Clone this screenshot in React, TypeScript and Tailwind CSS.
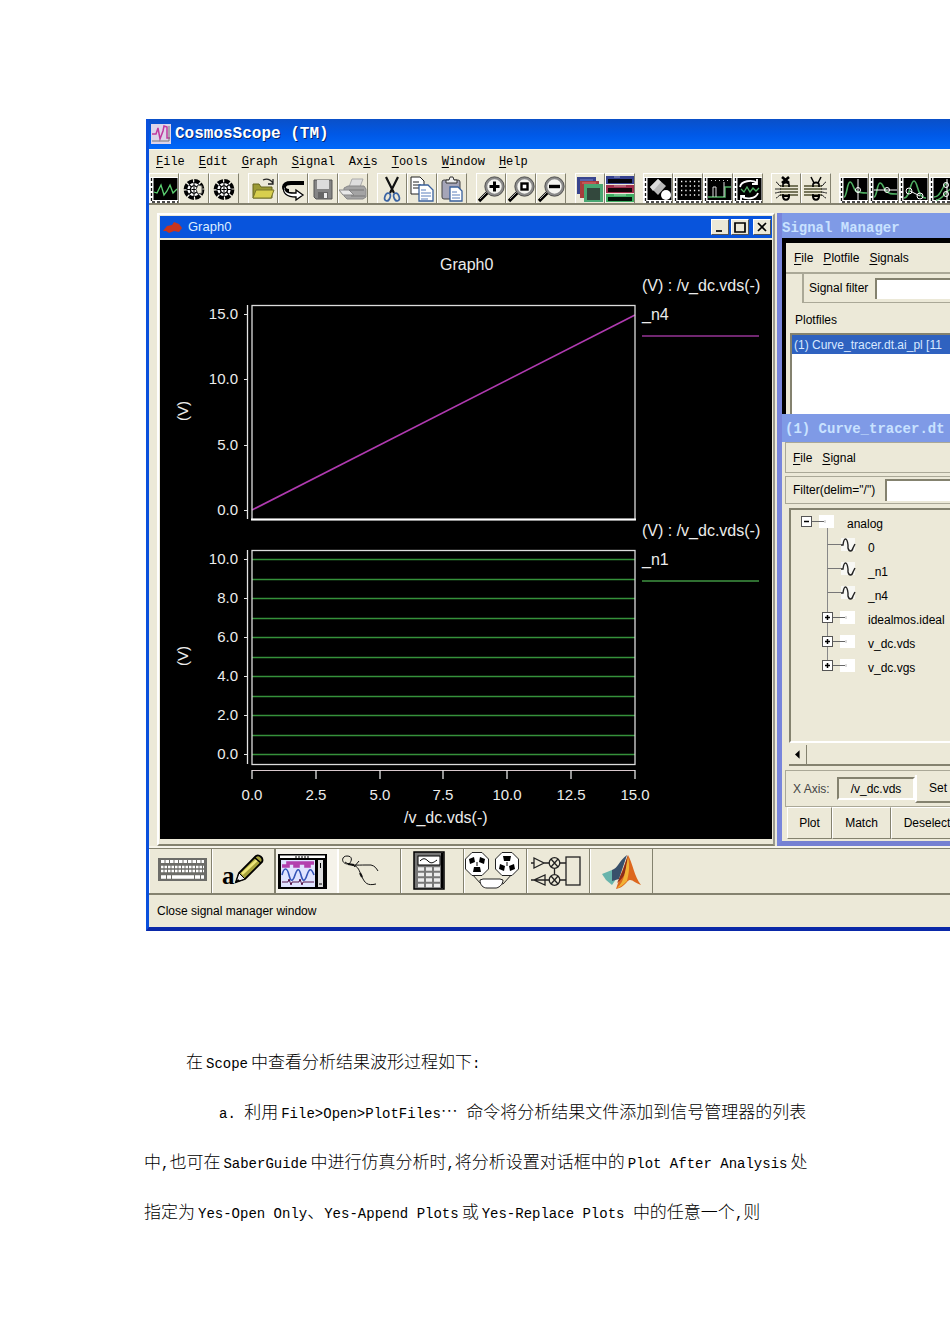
import React from "react";

type Kids = { children?: React.ReactNode };

/* ---------- toolbar icons (28 x 28) ---------- */

const Pic = ({ children }: Kids) => (
  <svg viewBox="0 0 28 28" className="block h-7 w-7" aria-hidden="true">
    {children}
  </svg>
);

const Scope = ({ children }: Kids) => (
  <Pic>
    <rect x="0" y="2" width="28" height="26" fill="#fff" />
    <path d="M1.500 3v24M2 27h26" stroke="#111" strokeWidth="1.300" strokeDasharray="3 2" fill="none" />
    <rect x="3.500" y="3" width="24" height="22" fill="#000" />
    {children}
  </Pic>
);

const Reel = ({ inner }: { inner: boolean }) => (
  <Pic>
    <circle cx="14" cy="14.500" r="8.500" fill="#fff" stroke="#000" strokeWidth="3.800" strokeDasharray="5.400 1.276" />
    <path d="M14 7v15M6.500 14.500h15M9 9.500l10 10M19 9.500l-10 10" stroke="#000" strokeWidth="1.100" />
    <circle cx="14" cy="14.500" r="3.600" fill="#fff" stroke="#000" strokeWidth="1.400" />
    <path d="M14 12v5M11.500 14.500h5" stroke="#000" />
    {inner ? <path d="M18 10l4 1v7l-4 1-2-4.500z" fill="#ece9d8" stroke="#555" /> : null}
  </Pic>
);

const Lens = ({ children }: Kids) => (
  <Pic>
    <path d="M2 26l9-9" stroke="#000" strokeWidth="3.4" />
    <path d="M3 24l7-7" stroke="#aaa" strokeWidth="1" />
    <circle cx="17.500" cy="11.500" r="8.500" fill="#f4f4f0" stroke="#8a8a8a" strokeWidth="2.600" />
    <circle cx="17.500" cy="11.500" r="9.700" fill="none" stroke="#333" strokeWidth=".7" />
    {children}
  </Pic>
);

const Bundle = ({ flip }: { flip: boolean }) => (
  <Pic>
    <g transform={flip ? "matrix(-1 0 0 1 28 0)" : undefined}>
      <path d="M8 11h18M8 14h18M8 17h18M8 20h18" stroke="#77765a" strokeWidth="2" />
      <path d="M9 11c-3 0-3-4-5-4M9 14H3M9 17c-3 0-4 1-6 1M9 20c-3 0-3 3-5 3" stroke="#222" fill="none" />
      {flip ? (
        <path d="M9 2l3 6M19 2l-3 6" stroke="#000" strokeWidth="1.500" />
      ) : (
        <path d="M10 2l7 6M17 2l-7 6" stroke="#000" strokeWidth="2.600" />
      )}
      <path d="M11 9c1-2 5-2 6 0M11 21c0 5 6 5 6 0z" fill="none" stroke="#000" strokeWidth="2" />
      <path d="M11 9v3M17 9v3M11 19v3M17 19v3" stroke="#000" strokeWidth="1.600" />
    </g>
  </Pic>
);

const green = "#4fae62";

const groupsA: [string, React.ReactNode][][] = [
  [
    ["New graph", <Scope key="i"><path d="M4 17l3 1 4-8 3 10 3-4 3-6 3 8 4-4" stroke="#5bd070" fill="none" strokeWidth="1.3" /></Scope>],
    ["Reel", <Reel key="i" inner />],
    ["Reel list", <Reel key="i" inner={false} />],
  ],
  [
    ["Open", <Pic key="i"><path d="M4 23V9h6l2 3h11v11z" fill="#9b9a34" stroke="#66651c" /><path d="M4 23l3-8h18l-3 8z" fill="#d8cf4e" stroke="#77752a" /><path d="M14 5c4-2 7-1 10 3M24 4v5h-5" stroke="#222" fill="none" strokeWidth="1.300" /></Pic>],
    ["Undo", <Pic key="i"><path d="M25 8H12c-9 0-9 8-2 8" stroke="#000" strokeWidth="4" fill="none" /><path d="M5 12c-2 6 3 10 12 10v3l7-5-7-5v3c-6 0-10 0-11-4" fill="#fff" stroke="#000" strokeWidth="1.300" /></Pic>],
    ["Save", <Pic key="i"><path d="M5 5h18v19H7l-2-2z" fill="#858585" stroke="#555" /><rect x="8" y="5" width="12" height="9" fill="#dcdcdc" /><rect x="9" y="17" width="10" height="7" fill="#666" /><rect x="15" y="18" width="3" height="5" fill="#eee" /></Pic>],
    ["Print", <Pic key="i"><path d="M10 12l3-8h11l-3 8z" fill="#dedede" stroke="#aaa" /><path d="M5 13l4-2h16l2 3v8l-3 2H8l-3-3z" fill="#a4a4a4" stroke="#888" /><path d="M0 15h10l5 5H4z" fill="#e8e8e8" stroke="#888" /><path d="M10 15h15M12 21h14" stroke="#777" /></Pic>],
  ],
  [
    ["Cut", <Pic key="i"><path d="M8 2l8 16M20 2l-8 16" stroke="#111" strokeWidth="2.200" /><ellipse cx="9.500" cy="22" rx="2.600" ry="4" fill="none" stroke="#3a64a4" strokeWidth="1.700" transform="rotate(20 9.500 22)" /><ellipse cx="18.500" cy="22" rx="2.600" ry="4" fill="none" stroke="#3a64a4" strokeWidth="1.700" transform="rotate(-20 18.500 22)" /></Pic>],
    ["Copy", <Pic key="i"><path d="M3 2h9l4 4v13H3z" fill="#fff" stroke="#222" /><path d="M5 7h6M5 10h8M5 13h8" stroke="#222" /><path d="M11 10h9l5 5v11H11z" fill="#fff" stroke="#39609c" strokeWidth="1.300" /><path d="M13 15h5M13 18h10M13 21h10M13 24h7" stroke="#5a7fbc" /></Pic>],
    ["Paste", <Pic key="i"><rect x="4" y="5" width="18" height="19" rx="2" fill="#a5a5b8" stroke="#444" /><path d="M8 8V5h3l1-3h3l1 3h3v3z" fill="#eee" stroke="#333" /><path d="M12 12h8l4 4v10H12z" fill="#fff" stroke="#39609c" strokeWidth="1.300" /><path d="M14 17h5M14 20h8M14 23h8" stroke="#5a7fbc" /></Pic>],
  ],
  [
    ["Zoom in", <Lens key="i"><path d="M17.500 6.500v10M12.500 11.500h10" stroke="#000" strokeWidth="3" /></Lens>],
    ["Zoom fit", <Lens key="i"><rect x="14.500" y="8.500" width="6" height="6" fill="#fff" stroke="#000" strokeWidth="2.400" /></Lens>],
    ["Zoom out", <Lens key="i"><path d="M12 11.500h11" stroke="#000" strokeWidth="3.400" /></Lens>],
  ],
  [
    ["Cascade", <Pic key="i"><rect x="1" y="2" width="19" height="17" fill="#39458e" /><path d="M4 5h13" stroke="#7584cc" /><rect x="4" y="6" width="19" height="17" fill="#a83d3d" /><path d="M6 8h14" stroke="#e07070" /><rect x="8" y="9" width="19" height="18" fill="#49a672" /><rect x="11" y="13" width="13" height="12" fill="#33483d" /></Pic>],
    ["Tile", <Pic key="i"><rect x="0" y="1" width="28" height="8" fill="#35418f" /><rect x="2" y="4" width="24" height="4" fill="#05050d" /><rect x="0" y="10" width="28" height="8" fill="#a02f4d" /><rect x="2" y="13" width="24" height="4" fill="#16050a" /><rect x="0" y="19" width="28" height="8" fill="#3fae62" /><rect x="2" y="22" width="24" height="4" fill="#04150a" /><path d="M8 2h6M8 11h12M8 20h12" stroke="#fff" strokeOpacity=".5" /></Pic>],
  ],
];

const groupsB: [string, React.ReactNode][][] = [
  [
    ["Erase", <Scope key="i"><path d="M6 12l8-8 8 7-8 9z" fill="#b9b9b9" /><path d="M6 12l8-8 3 3-8 9z" fill="#dcdcdc" /><circle cx="22" cy="20" r="5" fill="#fff" /></Scope>],
    ["Grid", <Scope key="i"><path d="M7 6.500h19M7 11h19M7 15.500h19M7 20h19" stroke="#fff" strokeWidth="1.300" strokeDasharray="1.300 3" /></Scope>],
    ["Digital", <Scope key="i"><path d="M7 5.500h19" stroke="#ccc" strokeDasharray="1 3" /><path d="M4 22h17V12h6" stroke={green} fill="none" strokeWidth="1.500" /><path d="M9 22V12h3v10M20 22V7" stroke="#ddd" fill="none" /></Scope>],
    ["Refresh", <Scope key="i"><path d="M6 12c1-6 12-8 17-4M23 4v5h-5M24 18c-2 6-12 7-17 3M7 25v-4h4" stroke="#fff" fill="none" strokeWidth="1.800" /><path d="M7 14l3 3 3-5 3 5 3-4 3 3 3-3" stroke={green} fill="none" strokeWidth="1.300" /></Scope>],
  ],
  [
    ["Create bus", <Bundle key="i" flip={false} />],
    ["Split bus", <Bundle key="i" flip />],
  ],
  [
    ["Measure", <Scope key="i"><path d="M4 22c3 0 3-15 6-15s3 7 6 9 5 2 11 2" stroke={green} fill="none" strokeWidth="1.600" /><path d="M18 4v21" stroke="#fff" /><circle cx="18" cy="15" r="2.500" fill="none" stroke="#fff" /></Scope>],
    ["Level", <Scope key="i"><path d="M4 22c3 0 3-14 6-14s3 5 6 8 5 3 11 3" stroke={green} fill="none" strokeWidth="1.600" /><path d="M4 15h23" stroke="#fff" /><circle cx="17" cy="15" r="2.500" fill="none" stroke="#fff" /></Scope>],
    ["Two points", <Scope key="i"><path d="M4 23c6 0 6-17 10-17s3 17 12 17" stroke={green} fill="none" strokeWidth="1.600" /><path d="M10 16l10 5" stroke="#fff" /><circle cx="9" cy="16" r="3" fill="none" stroke="#fff" /><circle cx="20" cy="21" r="3" fill="none" stroke="#fff" /></Scope>],
    ["Cross", <Scope key="i"><path d="M4 22c8 0 8-14 14-14M6 25c8 0 10-12 18-12" stroke={green} fill="none" strokeWidth="1.400" /><path d="M17 4v21" stroke="#fff" /><circle cx="16" cy="10" r="2.500" fill="none" stroke="#fff" /><circle cx="16" cy="19" r="2.500" fill="none" stroke="#fff" /></Scope>],
  ],
];

const ToolGroup = ({ items }: { items: [string, React.ReactNode][] }) => (
  <div className="flex">
    {items.map(([name, icon]) => (
      <button key={name} type="button" aria-label={name} className="h-[30px] w-[30px] shrink-0 border-l border-t border-r border-l-white border-t-white border-r-[#84826f] bg-[#ece9d8]">
        {icon}
      </button>
    ))}
  </div>
);

/* ---------- large application buttons (61 x 44) ---------- */

const Big = ({ children }: Kids) => (
  <svg viewBox="1 0 61 44" className="block h-11 w-[61px]" aria-hidden="true">
    {children}
  </svg>
);

const Outlet = ({ x, turn }: { x: number; turn: number }) => (
  <g transform={`translate(${x} 15) rotate(${turn})`}>
    <path d="M-5-11.500H5L11.500-5V5L5 11.500H-5L-11.500 5V-5z" fill="#fff" stroke="#222" />
    <path d="M-3 3h6l1 5h-8zM-8-5l5-2 1 5-5 2zM8-5L3-7 2-2l5 2z" fill="#000" />
    <path d="M0-2v4" stroke="#000" />
  </g>
);

const apps: [string, React.ReactNode][] = [
  ["Keyboard", <Big key="i"><rect x="9" y="9" width="49" height="23" fill="#6c6c68" /><path d="M12 12.500h43" stroke="#fff" strokeWidth="3" strokeDasharray="3.500 1" /><path d="M12 18h43M12 22h43" stroke="#fff" strokeWidth="2.600" strokeDasharray="2.500 1" /><path d="M12 28h43" stroke="#fff" strokeWidth="3.500" strokeDasharray="5 1 4 1 22 1" /></Big>],
  ["Annotate", <Big key="i"><text x="10" y="35" fontFamily="Liberation Serif, serif" fontWeight="700" fontSize="25">a</text><path d="M24 33l3-9 17-17c3-2 8 2 6 6L33 30z" fill="#a6a23c" stroke="#000" strokeWidth="1.800" /><path d="M30 25l15-14" stroke="#eee67a" strokeWidth="2.500" /><path d="M24 33l3-9 6 6z" fill="#eee" stroke="#000" /><path d="M23 34l3-4 2 2z" fill="#000" /><path d="M42 8l7 6" stroke="#000" strokeWidth="1.500" /></Big>],
  ["Scope", <Big key="i"><g transform="translate(-5 0)"><rect x="8" y="5" width="49" height="35" fill="#000" /><rect x="10" y="6.500" width="45" height="2.500" fill="#fff" /><path d="M25 8h14" stroke="#000" strokeDasharray="2 1" /><rect x="11" y="11" width="34" height="27" fill="#dfe3ff" /><path d="M12 17h6v-3h7v3h3v-3h8v3h3v-3h5" stroke="#b340ae" strokeWidth="3.600" fill="none" /><path d="M12 26c2-8 5-8 7 0s4 6 6 0 4-8 6 0 4 6 6 0 4-8 7 0" stroke="#3555b8" strokeWidth="1.600" fill="none" /><path d="M12 33h6l1-3 2 6 1-3h7l1-3 2 6 1-3h11" stroke="#55154a" fill="none" /><rect x="48" y="11" width="5" height="27" fill="#ddd" /><path d="M50.500 14v5M49 35h3" stroke="#000" /></g></Big>],
  ["Probe", <Big key="i"><g transform="translate(-6 0)"><path d="M16 15c-7 0-7-8-1-8 6 0 5 5 2 8M13 13c5 4 13 3 20 3h6c4 1 5 3 7 6" stroke="#111" fill="none" /><path d="M20 16c7 1 7 6 10 12 3 6 5 9 14 7M22 18l5-6" stroke="#111" fill="none" /><path d="M16 15l6 1M28 24l2 4" stroke="#111" strokeWidth="2" /></g></Big>],
  ["Calculator", <Big key="i"><g transform="translate(-3 0)"><rect x="16" y="3" width="30" height="37" fill="#777" stroke="#000" strokeWidth="1.500" /><rect x="20" y="7" width="22" height="9" fill="#fff" stroke="#000" /><path d="M22 12c3-3 5-3 8 0s5 2 9-1" stroke="#000" fill="none" /><path d="M20 20h22M20 25.500h22M20 31h22M20 36.500h22" stroke="#ececec" strokeWidth="3.500" strokeDasharray="6 2" /><path d="M44 4v35" stroke="#000" strokeWidth="2" /></g></Big>],
  ["Outlets", <Big key="i"><g transform="translate(-3 0)"><path d="M10 24l10 11 10-3 12 3 10-11" stroke="#222" fill="none" /><Outlet x={16} turn={0} /><Outlet x={46} turn={180} /><path d="M19 31l3-1h17l3 1c0 5-5 8-7 8h-9c-4 0-7-3-7-8z" fill="#fff" stroke="#222" /></g></Big>],
  ["Signal flow", <Big key="i"><g transform="translate(-2 0)" fill="none" stroke="#222" strokeWidth="1.300"><path d="M6 14h3M9 9v10l10-5zM19 14h5M35 14h6M6 31h14M20 26v10L9 31zM20 31h4M35 31h6M29.500 19.500v6" /><circle cx="29.500" cy="14" r="5.300" /><circle cx="29.500" cy="31" r="5.300" /><path d="M26 10l7 8M33 10l-7 8M26 27l7 8M33 27l-7 8" /><rect x="41" y="8" width="14" height="28" /></g></Big>],
  ["Matlab", <Big key="i"><g transform="translate(-2 0)"><path d="M14 25l10-4 9 2-9 13-6-5z" fill="#68b4ac" /><path d="M24 21c6-2 7-9 15-15l-8 24-7 2z" fill="#38506b" /><path d="M40 6c5 9 6 21 13 30-7-2-10-8-14-3-4 4-6 6-11 7l4-12z" fill="#dd671e" /><path d="M40 6l-5 15-6 13c4-3 8-7 9-14z" fill="#8e2c18" /><path d="M40 8c2 9 1 16-1 24-3 3-6 6-10 7 8-7 8-17 11-31z" fill="#f1b235" /></g></Big>],
];

/* ---------- graph ---------- */

const X0 = 252;
const X1 = 635;
const xTicks = ["0.0", "2.5", "5.0", "7.5", "10.0", "12.5", "15.0"];

function Axis({ top, bottom, first, last, labels }: { top: number; bottom: number; first: number; last: number; labels: string[] }) {
  return (
    <g>
      <path d={`M247.500 ${top}V${bottom}`} stroke="#e4e4e4" strokeWidth="1.300" />
      {labels.map((label, i) => {
        const y = Math.round(first + ((last - first) * i) / (labels.length - 1)) + 0.5;
        return (
          <g key={label}>
            <path d={`M244 ${y}h4`} stroke="#e4e4e4" />
            <text x="238" y={y + 4} textAnchor="end" fontSize="15">{label}</text>
          </g>
        );
      })}
      <rect x={X0} y={top + 0.5} width={X1 - X0} height={bottom - top} fill="none" stroke="#dcdcdc" strokeWidth="1.300" />
    </g>
  );
}

const Graph = () => (
  <svg viewBox="160 240 612 599" className="block w-full bg-black" fill="#ececec" fontFamily="Liberation Sans, Arial, sans-serif" fontSize="16" role="img" aria-label="Graph0">
    <text x="440" y="270">Graph0</text>
    <path d={`M${X0} 510L${X1} 315`} stroke="#b03ab0" strokeWidth="1.600" />
    <Axis top={305} bottom={519} first={314} last={510} labels={["15.0", "10.0", "5.0", "0.0"]} />
    <path d="M251 519.500H636" stroke="#fff" strokeWidth="2" />
    {Array.from({ length: 11 }, (_, i) => (
      <path key={i} d={`M${X0} ${Math.round(559 + i * 19.5) + 0.5}H${X1}`} stroke="#35913b" strokeWidth="1.400" />
    ))}
    <Axis top={550} bottom={764} first={559} last={754} labels={["10.0", "8.0", "6.0", "4.0", "2.0", "0.0"]} />
    <path d={`M${X0} 770.500H${X1}`} stroke="#d8c8cc" />
    {xTicks.map((label, i) => {
      const x = Math.round(X0 + i * 63.8);
      return (
        <g key={label}>
          <path d={`M${x} 770v9`} stroke="#e4e4e4" strokeWidth="1.300" />
          <text x={x} y="800" textAnchor="middle" fontSize="15">{label}</text>
        </g>
      );
    })}
    <text x="404" y="823">/v_dc.vds(-)</text>
    <text transform="translate(188 411) rotate(-90)" textAnchor="middle" fontSize="15">(V)</text>
    <text transform="translate(188 656) rotate(-90)" textAnchor="middle" fontSize="15">(V)</text>
    <text x="642" y="291">(V) : /v_dc.vds(-)</text>
    <text x="642" y="320">_n4</text>
    <path d="M642 336h117" stroke="#963496" strokeWidth="1.500" />
    <text x="642" y="536">(V) : /v_dc.vds(-)</text>
    <text x="642" y="565">_n1</text>
    <path d="M642 581h117" stroke="#3f9442" strokeWidth="1.500" />
  </svg>
);

/* ---------- small pieces ---------- */

const MenuItem = ({ text, at = 0 }: { text: string; at?: number }) => (
  <button type="button" className="whitespace-pre">
    {text.slice(0, at)}
    <span className="underline underline-offset-2">{text[at]}</span>
    {text.slice(at + 1)}
  </button>
);

const WinButton = ({ label, d }: { label: string; d: string }) => (
  <button type="button" aria-label={label} className="flex h-4 w-[18px] items-center justify-center border border-b-[#555] border-l-white border-r-[#555] border-t-white bg-[#ece9d8]">
    <svg viewBox="0 0 12 12" className="h-3 w-3" aria-hidden="true">
      <path d={d} fill="none" stroke="#000" strokeWidth="1.700" />
    </svg>
  </button>
);

const Expander = ({ open = false }: { open?: boolean }) => (
  <svg viewBox="0 0 34 24" className="h-6 w-[34px] shrink-0" aria-hidden="true">
    <rect x="18" y="5" width="15" height="13" fill="#fff" />
    <path d="M11 11.500h12" stroke="#666" />
    <path d="M24 10v3" stroke="#bbb" />
    <rect x=".5" y="6.500" width="10" height="10" fill="#fff" stroke="#555" />
    <path d={open ? "M3 11.500h5" : "M3 11.500h5M5.500 9v5"} stroke="#000" strokeWidth="1.500" />
  </svg>
);

const Wave = () => (
  <svg viewBox="0 0 34 24" className="h-6 w-[34px] shrink-0" aria-hidden="true">
    <rect x="19" y="4" width="14" height="13" fill="#f8f8f4" />
    <path d="M5.500 10.500H19" stroke="#777" />
    <path d="M19 11h2c1-8 4-8 5 0v3c1 4 4 4 5 0l2-4" stroke="#222" strokeWidth="1.400" fill="none" />
  </svg>
);

const nodes: [string, boolean][] = [
  ["0", false],
  ["_n1", false],
  ["_n4", false],
  ["idealmos.ideal", true],
  ["v_dc.vds", true],
  ["v_dc.vgs", true],
];

const pushBtn = "h-8 shrink-0 border border-b-[#84826f] border-l-white border-r-[#84826f] border-t-white text-center";

const La = ({ children }: Kids) => <span className="text-[14px]">{children}</span>;
const Gap = () => <span className="inline-block w-[3px]" />;

/* ---------- page ---------- */

export default function App() {
  return (
    <main className="min-h-[1344px] overflow-hidden bg-white pt-[119px] text-black">
      <section className="ml-[146px] overflow-hidden border-b-4 border-l-[3px] border-b-[#0a28a8] border-l-[#0a50dc] bg-[#ece9d8] font-['Liberation_Sans',Arial,sans-serif] text-[12px]">
        <header className="flex h-[30px] items-center gap-1 bg-gradient-to-b from-[#0a50c8] via-[#0058e6] to-[#0068fa] pl-[2px] text-white">
          <svg viewBox="0 0 20 20" className="h-5 w-5" aria-hidden="true">
            <rect width="20" height="20" fill="#ddd4ea" />
            <path d="M1 10h4l2-6 2 11 3-8 1-5 3 1v11h3" stroke="#c0389f" strokeWidth="1.500" fill="none" />
            <path d="M1 17h17V2" stroke="#777" fill="none" />
          </svg>
          <h1 className="whitespace-pre font-['Liberation_Mono',monospace] text-[16px] font-bold [text-shadow:1px_1px_0_#02256e]">CosmosScope (TM)</h1>
        </header>

        <nav className="flex h-6 items-center gap-[14px] border-t border-[#f8f6ec] pl-[7px] font-['Liberation_Mono',monospace] text-[12px]">
          <MenuItem text="File" />
          <MenuItem text="Edit" />
          <MenuItem text="Graph" />
          <MenuItem text="Signal" />
          <MenuItem text="Axis" at={2} />
          <MenuItem text="Tools" />
          <MenuItem text="Window" />
          <MenuItem text="Help" />
        </nav>

        <div className="flex gap-2 border-b-2 border-[#84826f]">
          <div className="flex gap-[9px]">
            {groupsA.map((g, i) => <ToolGroup key={i} items={g} />)}
          </div>
          <div className="flex gap-2">
            {groupsB.map((g, i) => <ToolGroup key={i} items={g} />)}
          </div>
        </div>

        <div className="flex items-stretch border-b-2 border-[#f6f4ea] pl-2 pt-2">
          <article className="mr-[2px] w-[618px] shrink-0 border-b-2 border-b-[#84826f] border-l-2 border-l-white border-r-2 border-r-[#9a9a90] border-t-2 border-t-white px-px pt-px">
            <header className="mb-[2px] flex h-[22px] items-center bg-[#0854dc] pl-[2px] pr-px text-[#dcecff]">
              <svg viewBox="0 0 22 16" className="mr-1 h-4 w-[22px]" aria-hidden="true">
                <path d="M1 12l4-5 5-1 2-3 5 2 3 4-3 4-5-1-5 2-3-2z" fill="#c8351d" />
              </svg>
              <h2 className="flex-1 text-[13px]">Graph0</h2>
              <div className="flex items-center gap-[2px]">
                <WinButton label="Minimize" d="M2 10h6" />
                <WinButton label="Maximize" d="M1 2h10v9H1z" />
                <div className="pl-[2px]"><WinButton label="Close" d="M2 2l8 8M10 2l-8 8" /></div>
              </div>
            </header>
            <Graph />
          </article>

          <aside className="min-w-0 flex-1 border-b-[5px] border-l-[5px] border-b-[#7580d2] border-l-[#7885dc] bg-[#ece9d8]">
            <section>
              <h2 className="h-[25px] overflow-hidden whitespace-pre bg-[#7f9ae6] font-['Liberation_Mono',monospace] text-[14px] font-bold leading-[30px] text-[#c9e2ff]">Signal Manager</h2>
              <div className="border-l-4 border-t-[5px] border-black">
                <nav className="flex h-[31px] items-center gap-[10px] border-b-2 border-[#aaa897] pl-[8px]">
                  <MenuItem text="File" />
                  <MenuItem text="Plotfile" />
                  <MenuItem text="Signals" />
                </nav>
                <div className="ml-4 flex h-[29px] items-center border-b border-l-2 border-[#aaa897] pl-[5px]">
                  <label htmlFor="signal-filter" className="w-[66px] shrink-0 whitespace-nowrap">Signal filter</label>
                  <input id="signal-filter" className="h-[21px] w-full min-w-0 border-l-2 border-t-2 border-[#84826f] bg-white" />
                </div>
                <h3 className="h-[30px] pl-[9px] leading-[34px]">Plotfiles</h3>
                <div className="ml-1 h-[81px] border-l-2 border-t-2 border-[#84826f] bg-white">
                  <p className="h-[19px] overflow-hidden whitespace-nowrap bg-[#2f62c0] pl-[2px] leading-[20px] text-[#d8e8ff]">(1) Curve_tracer.dt.ai_pl [11</p>
                </div>
              </div>
            </section>

            <section>
              <h2 className="h-[28px] overflow-hidden whitespace-pre bg-[#7f9ae6] pl-[3px] font-['Liberation_Mono',monospace] text-[14px] font-bold leading-[30px] text-[#c9e2ff]">(1) Curve_tracer.dt</h2>
              <div className="pl-[3px]">
                <nav className="flex h-[31px] items-center gap-[10px] border-b border-l border-t border-[#aaa897] pl-[7px]">
                  <MenuItem text="File" />
                  <MenuItem text="Signal" />
                </nav>
                <div className="mt-[3px] flex h-7 items-center border-b border-l border-t border-[#aaa897] pl-[7px]">
                  <label htmlFor="delim-filter" className="w-[92px] shrink-0 whitespace-nowrap">Filter(delim="/")</label>
                  <input id="delim-filter" className="h-[22px] w-full min-w-0 border-l-2 border-t-2 border-[#84826f] bg-white" />
                </div>
                <div className="ml-1 mt-1 h-[235px] overflow-hidden border-b-2 border-l-2 border-t-2 border-b-white border-l-[#84826f] border-t-[#84826f] pl-[10px]">
                  <div className="flex items-center gap-3">
                    <Expander open />
                    <span className="pt-1">analog</span>
                  </div>
                  <ul className="relative ml-[21px]">
                    <li aria-hidden="true" className="absolute left-[5px] top-[-6px] h-[138px] w-px bg-[#888]" />
                    {nodes.map(([name, branch]) => (
                      <li key={name} className="relative flex h-6 items-center gap-3 whitespace-nowrap">
                        {branch ? <Expander /> : <Wave />}
                        <span className="pt-1">{name}</span>
                      </li>
                    ))}
                  </ul>
                </div>
                <div className="ml-1 mt-[2px] flex h-[21px] border-b-2 border-[#84826f]">
                  <button type="button" aria-label="Scroll left" className="flex w-[18px] items-center justify-center border-r border-[#84826f]">
                    <svg viewBox="0 0 6 10" className="h-[9px] w-[5px]" aria-hidden="true"><path d="M5.500 0v10L0 5z" /></svg>
                  </button>
                </div>
                <div className="mt-1 flex h-[37px] items-center overflow-hidden border-b border-l border-t border-[#aaa897] pl-[7px]">
                  <span className="w-[44px] shrink-0 whitespace-nowrap text-[#444]">X Axis:</span>
                  <span className="flex h-[23px] w-[78px] shrink-0 items-center justify-center border-2 border-b-white border-l-[#84826f] border-r-white border-t-[#84826f]">/v_dc.vds</span>
                  <button type="button" className="h-7 shrink-0 border-b-2 border-l-2 border-b-[#84826f] border-l-white px-3">Set</button>
                </div>
                <div className="flex overflow-hidden pb-[2px] pl-[2px]">
                  <button type="button" className={pushBtn + " w-[45px]"}>Plot</button>
                  <button type="button" className={pushBtn + " w-[59px]"}>Match</button>
                  <button type="button" className={pushBtn + " w-[72px]"}>Deselect</button>
                </div>
              </div>
            </section>
          </aside>
        </div>

        <div className="flex border-b-2 border-t border-b-[#84826f] border-t-[#84826f]">
          {apps.map(([name, icon]) => (
            <button
              key={name}
              type="button"
              aria-label={name}
              className={
                name === "Scope"
                  ? "border-l border-r border-l-[#84826f] border-r-white bg-[#f5f3ea]"
                  : "border-l border-r border-l-white border-r-[#84826f]"
              }
            >
              {icon}
            </button>
          ))}
        </div>
        <footer className="flex h-8 items-center pl-2">Close signal manager window</footer>
      </section>

      <article lang="zh-CN" className="ml-[144px] mt-[108px] whitespace-pre font-['Liberation_Mono','Noto_Sans_CJK_SC',monospace] text-[17px] font-light leading-[50px] text-black">
        <p className="h-[50px] pl-[42px]">在<Gap /><La>Scope</La><Gap />中查看分析结果波形过程如下<La>:</La></p>
        <p className="h-[50px] pl-[75px]"><La>a. </La>利用<Gap /><La>File&gt;Open&gt;PlotFiles</La><span className="font-['Noto_Sans_CJK_SC',sans-serif] leading-none">…</span><La> </La>命令将分析结果文件添加到信号管理器的列表</p>
        <p className="h-[50px]">中<La>,</La>也可在<Gap /><La>SaberGuide</La><Gap />中进行仿真分析时<La>,</La>将分析设置对话框中的<Gap /><La>Plot After Analysis</La><Gap />处</p>
        <p className="h-[50px]">指定为<Gap /><La>Yes-Open Only</La>、<La>Yes-Append Plots</La><Gap />或<Gap /><La>Yes-Replace Plots </La>中的任意一个<La>,</La>则</p>
      </article>
    </main>
  );
}
